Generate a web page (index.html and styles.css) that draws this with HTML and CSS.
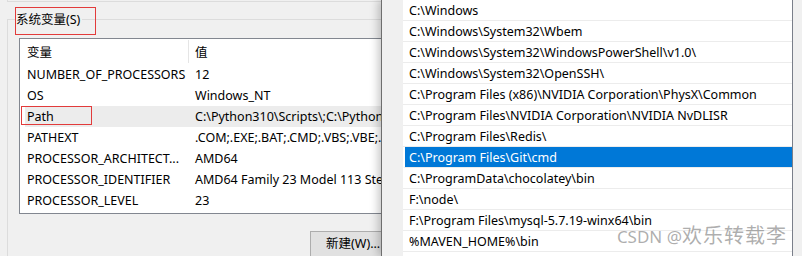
FILE: index.html
```html
<!DOCTYPE html>
<html lang="zh-CN">
<head>
<meta charset="utf-8">
<title>环境变量</title>
<link rel="stylesheet" href="styles.css">
</head>
<body>
<div class="desk">
  <div class="envwin">
    <div class="group-prev"></div>
    <div class="group">
      <div class="group-title">系统变量(S)</div>
      <div class="list">
        <div class="lhead">
          <div class="c1">变量</div>
          <div class="c2">值</div>
        </div>
        <div class="lrow"><div class="c1">NUMBER_OF_PROCESSORS</div><div class="c2">12</div></div>
        <div class="lrow"><div class="c1">OS</div><div class="c2">Windows_NT</div></div>
        <div class="lrow hl"><div class="c1 mark">Path</div><div class="c2">C:\Python310\Scripts\;C:\Python3</div></div>
        <div class="lrow"><div class="c1">PATHEXT</div><div class="c2">.COM;.EXE;.BAT;.CMD;.VBS;.VBE;.</div></div>
        <div class="lrow"><div class="c1">PROCESSOR_ARCHITECT...</div><div class="c2">AMD64</div></div>
        <div class="lrow"><div class="c1">PROCESSOR_IDENTIFIER</div><div class="c2">AMD64 Family 23 Model 113 Ste</div></div>
        <div class="lrow"><div class="c1">PROCESSOR_LEVEL</div><div class="c2">23</div></div>
      </div>
      <div class="btn">新建(W)...</div>
    </div>
  </div>
  <div class="editwin">
    <div class="plist">
      <div class="prow">C:\Windows</div>
      <div class="prow">C:\Windows\System32\Wbem</div>
      <div class="prow">C:\Windows\System32\WindowsPowerShell\v1.0\</div>
      <div class="prow">C:\Windows\System32\OpenSSH\</div>
      <div class="prow">C:\Program Files (x86)\NVIDIA Corporation\PhysX\Common</div>
      <div class="prow">C:\Program Files\NVIDIA Corporation\NVIDIA NvDLISR</div>
      <div class="prow">C:\Program Files\Redis\</div>
      <div class="prow sel">C:\Program Files\Git\cmd</div>
      <div class="prow">C:\ProgramData\chocolatey\bin</div>
      <div class="prow">F:\node\</div>
      <div class="prow">F:\Program Files\mysql-5.7.19-winx64\bin</div>
      <div class="prow">%MAVEN_HOME%\bin</div>
    </div>
  </div>
  <div class="watermark">CSDN @<span class="wm-cjk">欢乐转载李</span></div>
</div>
</body>
</html>
```
FILE: styles.css
```css
html, body {
  margin: 0;
  padding: 0;
}
body {
  font-family: "Noto Sans", "Noto Sans CJK SC", sans-serif;
  font-size: 12.5px;
  color: #000;
  background: #f0f0f0;
}
.desk {
  position: relative;
  display: flex;
  width: 802px;
  height: 256px;
  overflow: hidden;
  background: #f0f0f0;
}
.envwin {
  width: 381px;
  flex: none;
  overflow: hidden;
  background: #f0f0f0;
}
.group-prev {
  margin-left: 7px;
  width: 600px;
  height: 1px;
  border-left: 1px solid #dcdcdc;
  border-bottom: 1px solid #dcdcdc;
}
.group {
  margin-top: 17px;
  margin-left: 7px;
  width: 600px;
  height: 300px;
  border-top: 1px solid #dcdcdc;
  border-left: 1px solid #dcdcdc;
}
.group-title {
  position: relative;
  width: fit-content;
  margin-top: -10px;
  margin-left: 7px;
  padding: 0 2px 0 1px;
  height: 20px;
  line-height: 20px;
  background: #f0f0f0;
}
.group-title::after {
  content: "";
  position: absolute;
  left: 0;
  top: -3px;
  width: 81px;
  height: 28px;
  box-sizing: border-box;
  border: 1px solid #e23b3b;
}
.list {
  margin-top: 8px;
  margin-left: 11px;
  width: 520px;
  padding-bottom: 2px;
  background: #fff;
  border: 1px solid #828790;
  border-right: none;
}
.lhead, .lrow {
  display: flex;
  margin-left: 5px;
  white-space: nowrap;
}
.lhead {
  height: 25px;
  align-items: center;
}
.lrow {
  height: 21px;
  align-items: center;
}
.c1 {
  width: 163px;
  flex: none;
  box-sizing: border-box;
  padding-left: 2px;
  overflow: hidden;
}
.c2 {
  flex: none;
  padding-left: 7px;
}
.lhead .c2 {
  align-self: stretch;
  display: flex;
  align-items: center;
  margin-top: 1px;
  margin-bottom: 1px;
  padding-left: 6px;
  border-left: 1px solid #e5e5e5;
}
.hl {
  background: #ececec;
}
.mark {
  position: relative;
  overflow: visible;
}
.mark::after {
  content: "";
  position: absolute;
  left: -4px;
  top: -2px;
  width: 71px;
  height: 19px;
  box-sizing: border-box;
  border: 1px solid #e23b3b;
}
.btn {
  margin-top: 17px;
  margin-left: 302px;
  width: 90px;
  height: 26px;
  box-sizing: border-box;
  padding-left: 15px;
  line-height: 24px;
  background: #e1e1e1;
  border: 1px solid #adadad;
  white-space: nowrap;
}
.editwin {
  flex: none;
  width: 421px;
  box-sizing: border-box;
  border-left: 1px solid #6e6e6e;
  padding-left: 21px;
  background: #f0f0f0;
  box-shadow: -3px 0 8px rgba(0, 0, 0, 0.22);
}
.plist {
  width: 390px;
  height: 256px;
  box-sizing: border-box;
  background: #fff;
  border-right: 1px solid #7a7f8a;
}
.prow {
  height: 21px;
  box-sizing: border-box;
  padding-top: 1px;
  padding-left: 6px;
  line-height: 19px;
  border-bottom: 1px solid #ececec;
  white-space: nowrap;
  overflow: hidden;
}
.prow.sel {
  background: #0078d7;
  color: #fff;
  border-left: 2px solid #fff;
  padding-left: 4px;
}
.watermark {
  position: absolute;
  right: 15px;
  top: 224px;
  font-size: 17px;
  line-height: 24px;
  color: rgba(120, 120, 120, 0.6);
  white-space: nowrap;
}
.wm-cjk {
  font-size: 20px;
  letter-spacing: 1px;
}
```
